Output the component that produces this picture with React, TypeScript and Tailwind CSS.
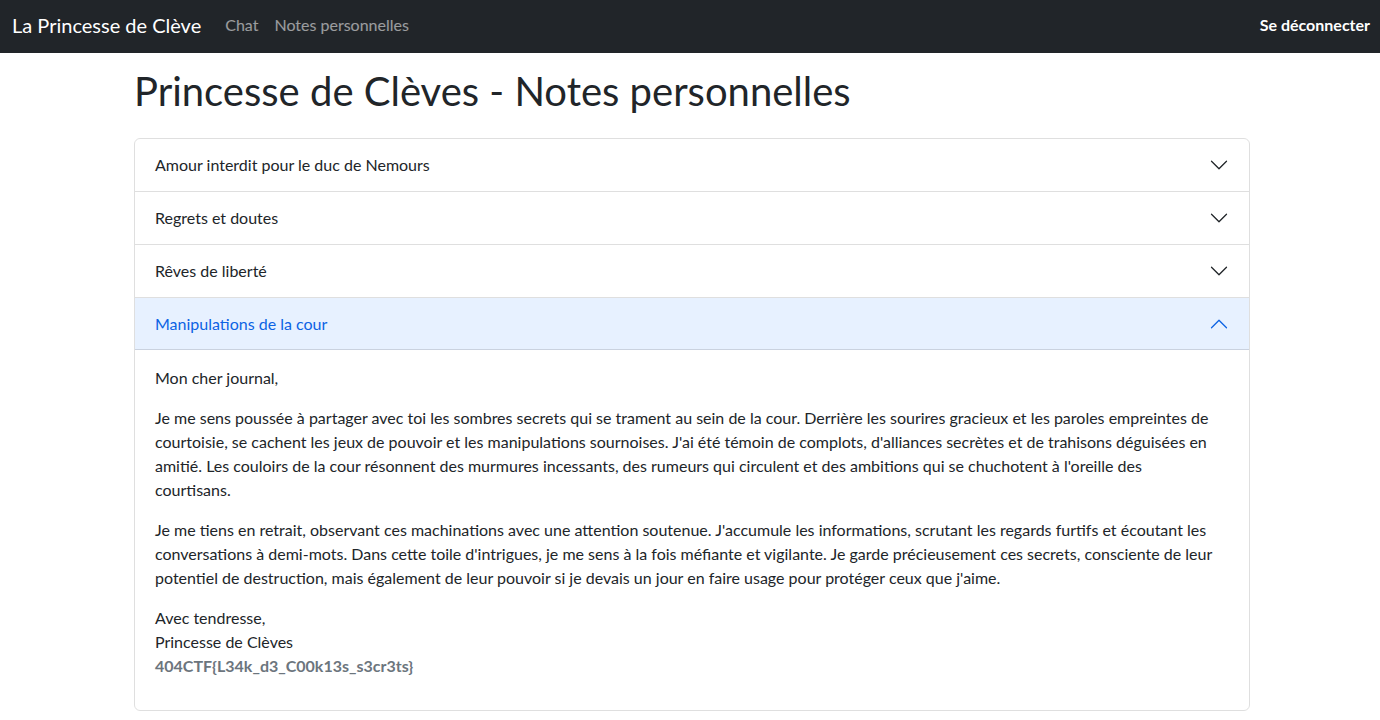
import React from 'react';

const items = [
  'Amour interdit pour le duc de Nemours',
  'Regrets et doutes',
  'Rêves de liberté',
];

function Chevron({ open }: { open?: boolean }) {
  return (
    <svg
      viewBox="0 0 16 16"
      className={open ? 'w-5 h-5 rotate-180 fill-[#0c63e4]' : 'w-5 h-5 fill-[#212529]'}
    >
      <path
        fillRule="evenodd"
        d="M1.646 4.646a.5.5 0 0 1 .708 0L8 10.293l5.646-5.647a.5.5 0 0 1 .708.708l-6 6a.5.5 0 0 1-.708 0l-6-6a.5.5 0 0 1 0-.708z"
      />
    </svg>
  );
}

export default function App() {
  return (
    <div className="min-h-screen bg-white text-[#212529] font-['Lato','Liberation_Sans',sans-serif]">
      <nav className="h-[53px] bg-[#212529] flex items-center justify-between pl-3 pr-[10px] pb-1">
        <div className="flex items-center">
          <span className="text-[20px] text-white mr-4">La Princesse de Clève</span>
          <span className="px-2 text-base text-white/55">Chat</span>
          <span className="px-2 text-base text-white/55">Notes personnelles</span>
        </div>
        <span className="text-base font-bold text-white">Se déconnecter</span>
      </nav>

      <main className="w-[1116px] ml-[134px]">
        <h1 className="text-[40px] leading-[48px] mt-[14px] mb-[23px]">Princesse de Clèves - Notes personnelles</h1>

        <div className="border border-black/[0.125] rounded-md overflow-hidden">
          {items.map((title) => (
            <div key={title} className="h-[53px] border-b border-black/[0.125] flex items-center justify-between px-5">
              <span className="text-base">{title}</span>
              <Chevron />
            </div>
          ))}
          <div className="h-[52px] bg-[#e7f1ff] text-[#0c63e4] border-b border-black/[0.125] flex items-center justify-between px-5">
            <span className="text-base">Manipulations de la cour</span>
            <Chevron open />
          </div>
          <div className="px-5 py-4 text-base leading-6 whitespace-nowrap">
            <p className="mb-4">Mon cher journal,</p>
            <p className="mb-4">
              Je me sens poussée à partager avec toi les sombres secrets qui se trament au sein de la cour. Derrière les sourires gracieux et les paroles empreintes de
              <br />
              courtoisie, se cachent les jeux de pouvoir et les manipulations sournoises. J'ai été témoin de complots, d'alliances secrètes et de trahisons déguisées en
              <br />
              amitié. Les couloirs de la cour résonnent des murmures incessants, des rumeurs qui circulent et des ambitions qui se chuchotent à l'oreille des
              <br />
              courtisans.
            </p>
            <p className="mb-4">
              Je me tiens en retrait, observant ces machinations avec une attention soutenue. J'accumule les informations, scrutant les regards furtifs et écoutant les
              <br />
              conversations à demi-mots. Dans cette toile d'intrigues, je me sens à la fois méfiante et vigilante. Je garde précieusement ces secrets, consciente de leur
              <br />
              potentiel de destruction, mais également de leur pouvoir si je devais un jour en faire usage pour protéger ceux que j'aime.
            </p>
            <p className="mb-4">
              Avec tendresse,
              <br />
              Princesse de Clèves
              <br />
              <span className="font-bold text-[#6c757d]">404CTF{'{'}L34k_d3_C00k13s_s3cr3ts{'}'}</span>
            </p>
          </div>
        </div>
      </main>
    </div>
  );
}
